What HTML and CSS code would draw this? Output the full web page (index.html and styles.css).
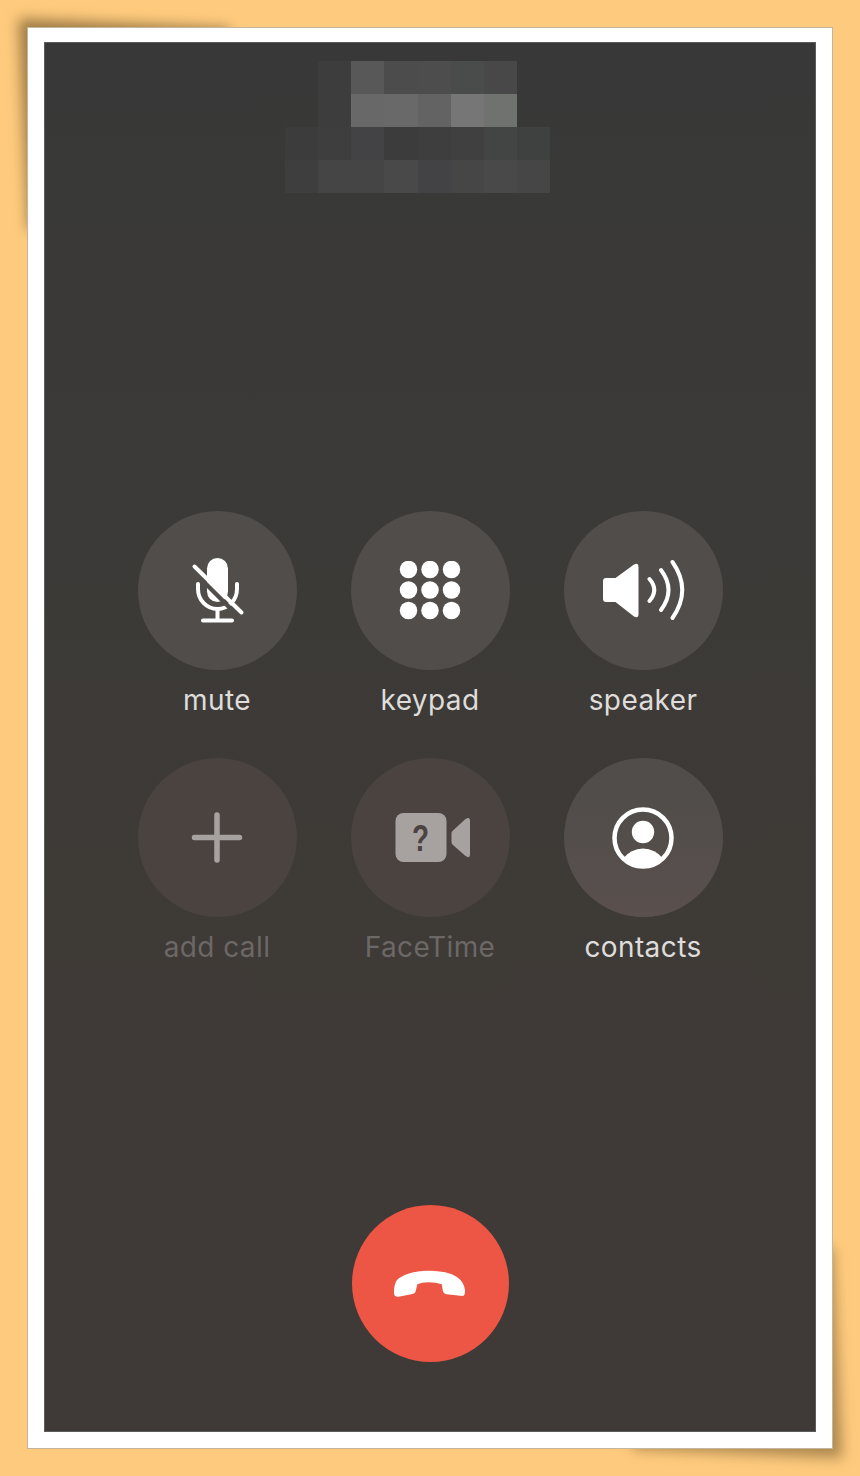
FILE: index.html
```html
<!DOCTYPE html>
<html lang="en">
<head>
    <meta charset="UTF-8">
    <meta name="viewport" content="width=device-width, initial-scale=1.0">
    <title>Call</title>
    <link rel="stylesheet" href="styles.css">
</head>
<body>
    <div class="card">
        <div class="screen">
            <!-- pixelated caller name -->
            <div class="caller">
                <i></i><i class="t3d"></i><i class="t58"></i><i class="t4c"></i><i class="t4d"></i><i class="t4b"></i><i class="t48"></i><i></i>
                <i></i><i class="t3d"></i><i class="t68"></i><i class="t69"></i><i class="t63"></i><i class="t76"></i><i class="t71"></i><i></i>
                <i class="t3c"></i><i class="t3e"></i><i class="t43"></i><i class="t3c"></i><i class="t3e"></i><i class="t40"></i><i class="t44"></i><i class="t41"></i>
                <i class="t3e"></i><i class="t45"></i><i class="t45"></i><i class="t49"></i><i class="t43"></i><i class="t46"></i><i class="t49"></i><i class="t46"></i>
            </div>

            <div class="controls">
                <div class="control">
                    <div class="circle">
                        <svg class="icon" width="60" height="70" viewBox="0 0 60 70">
                            <rect x="20" y="2" width="21" height="44" rx="10.500" fill="#fff"/>
                            <path d="M11 28V33a19.500 20 0 0 0 39 0V28" fill="none" stroke="#fff" stroke-width="4" stroke-linecap="round"/>
                            <path d="M30.500 53V63M16 64.500H45" fill="none" stroke="#fff" stroke-width="4" stroke-linecap="round"/>
                            <path d="M4 13 51 60" stroke="#514d4a" stroke-width="4.500"/>
                            <path d="M7.500 10.500 54.500 56.500" stroke="#fff" stroke-width="4" stroke-linecap="round"/>
                        </svg>
                    </div>
                    <span class="label">mute</span>
                </div>
                <div class="control">
                    <div class="circle">
                        <svg class="icon" width="62" height="60" viewBox="0 0 62 60">
                            <g fill="#fff">
                                <circle cx="9.500" cy="8.500" r="8.750"/><circle cx="31" cy="8.500" r="8.750"/><circle cx="52.500" cy="8.500" r="8.750"/>
                                <circle cx="9.500" cy="29" r="8.750"/><circle cx="31" cy="29" r="8.750"/><circle cx="52.500" cy="29" r="8.750"/>
                                <circle cx="9.500" cy="49.500" r="8.750"/><circle cx="31" cy="49.500" r="8.750"/><circle cx="52.500" cy="49.500" r="8.750"/>
                            </g>
                        </svg>
                    </div>
                    <span class="label">keypad</span>
                </div>
                <div class="control">
                    <div class="circle">
                        <svg class="icon" width="90" height="64" viewBox="0 0 90 64">
                            <path d="M8 19H17.500L36 5.500Q40.500 3 40.500 8V55Q40.500 60 36 57.500L17.500 43H8Q5 43 5 40V22Q5 19 8 19Z" fill="#fff"/>
                            <path d="M51.500 20Q61 31 51.500 42M63 11Q78 31 63 51M74.500 3Q94 31 74.500 59" fill="none" stroke="#fff" stroke-width="4" stroke-linecap="round"/>
                        </svg>
                    </div>
                    <span class="label">speaker</span>
                </div>

                <div class="control off">
                    <div class="circle">
                        <svg class="icon" width="52" height="52" viewBox="0 0 52 52">
                            <path d="M26 3V48M3.500 25.500H48.500" fill="none" stroke="#a7a2a0" stroke-width="5.500" stroke-linecap="round"/>
                        </svg>
                    </div>
                    <span class="label">add call</span>
                </div>
                <div class="control off">
                    <div class="circle">
                        <svg class="icon" width="82" height="52" viewBox="0 0 82 52">
                            <rect x="6.500" y="1" width="51" height="49" rx="8" fill="#a7a2a0"/>
                            <text class="qmark" x="31.500" y="39" text-anchor="middle" textLength="17" lengthAdjust="spacingAndGlyphs">?</text>
                            <path d="M62.500 21Q62.500 19.500 64 18.500L76.500 7Q81 4 81 9V42Q81 47 76.500 44L64 33Q62.500 32 62.500 30Z" fill="#a7a2a0"/>
                        </svg>
                    </div>
                    <span class="label">FaceTime</span>
                </div>
                <div class="control">
                    <div class="circle contacts">
                        <svg class="icon" width="64" height="64" viewBox="0 0 64 64">
                            <circle cx="32" cy="32" r="28.500" fill="none" stroke="#fff" stroke-width="4.500"/>
                            <circle cx="32" cy="26" r="11.200" fill="#fff"/>
                            <path d="M11.500 53Q20 42.500 32 42.500Q44 42.500 52.500 53A29 29 0 0 1 11.500 53Z" fill="#fff"/>
                        </svg>
                    </div>
                    <span class="label">contacts</span>
                </div>
            </div>

            <div class="end-call">
                <svg width="76" height="31" viewBox="0 0 76 31">
                    <path d="M2 22Q2.500 14 6.500 10.500Q17 2.700 36.500 2.700Q56 2.700 65 9Q72 14 73 22Q73.500 27.500 70.500 28L54.500 26.300Q51 25.500 50.700 22L49.800 16.300Q44 14.300 36.500 14.300Q30 14.300 25.300 16.300L24 22Q23.500 25.500 20.500 26L6.500 28.700Q2 29 2 25Z" fill="#fff"/>
                </svg>
            </div>
        </div>
    </div>
</body>
</html>
```

FILE: styles.css
```css
html, body {
    margin: 0;
    height: 100%;
}
body {
    background-color: #fecb7e;
    font-family: Inter, "Open Sans", sans-serif;
    padding: 27px;
    box-sizing: border-box;
}
.card {
    position: relative;
    height: 100%;
    box-sizing: border-box;
    padding: 14px 16px 16px;
    background-color: #fff;
    border: 1px solid #c4b59e;
}
/* the lifted corners of the photo: a thin wedge, mostly hidden under the card */
.card::before,
.card::after {
    content: "";
    position: absolute;
    z-index: -1;
    width: 210px;
    height: 210px;
    filter: blur(7px);
}
.card::before {
    top: -9px;
    left: -9px;
    background: conic-gradient(from 92.6deg at 0 0, rgba(70, 50, 20, 0.55) 0 84.8deg, transparent 0);
}
.card::after {
    right: -10px;
    bottom: -10px;
    background: conic-gradient(from 272.6deg at 100% 100%, rgba(70, 50, 20, 0.45) 0 84.8deg, transparent 0);
}
.screen {
    height: 100%;
    box-sizing: border-box;
    padding-top: 18px;
    display: flex;
    flex-direction: column;
    align-items: center;
    border: 1px solid #5c5c5c;
    background: linear-gradient(180deg, #383838 0%, #3b3a38 30%, #3e3a36 60%, #3f3a37 100%);
}
.caller {
    display: grid;
    grid-template-columns: repeat(8, 33.125px);
    grid-auto-rows: 33px;
    margin-right: 25px;
}
.t3c { background-color: #3c3c3c; }
.t3d { background-color: #3d3d3d; }
.t3e { background-color: #3e3e3e; }
.t40 { background-color: #404040; }
.t41 { background-color: #3f4140; }
.t43 { background-color: #434345; }
.t44 { background-color: #434544; }
.t45 { background-color: #454545; }
.t46 { background-color: #464646; }
.t48 { background-color: #484848; }
.t49 { background-color: #494949; }
.t4b { background-color: #4a4c4b; }
.t4c { background-color: #4c4c4c; }
.t4d { background-color: #4d4d4d; }
.t58 { background-color: #585858; }
.t63 { background-color: #636363; }
.t68 { background-color: #686868; }
.t69 { background-color: #696969; }
.t71 { background-color: #707270; }
.t76 { background-color: #767676; }

.controls {
    margin-top: 318px;
    display: grid;
    grid-template-columns: repeat(3, 213px);
    row-gap: 42px;
}
.control {
    display: flex;
    flex-direction: column;
    align-items: center;
}
.circle {
    width: 159px;
    height: 159px;
    border-radius: 50%;
    background-color: #514d4a;
    display: flex;
    align-items: center;
    justify-content: center;
}
.contacts {
    background: linear-gradient(180deg, #514d4a 30%, #5a504e 100%);
}
.icon {
    flex: none;
}
.label {
    margin-top: 14px;
    font-size: 28px;
    line-height: 32px;
    letter-spacing: 0.4px;
    color: #dfdddb;
}
.off .circle {
    background-color: #4a4340;
}
.off .label {
    color: #6c6866;
}
.qmark {
    font-family: "Liberation Sans", sans-serif;
    font-size: 37px;
    font-weight: bold;
    fill: #4a4341;
}
.end-call {
    margin-top: 242px;
    width: 157px;
    height: 157px;
    border-radius: 50%;
    background-color: #ed5645;
    display: flex;
    align-items: center;
    justify-content: center;
}
```
